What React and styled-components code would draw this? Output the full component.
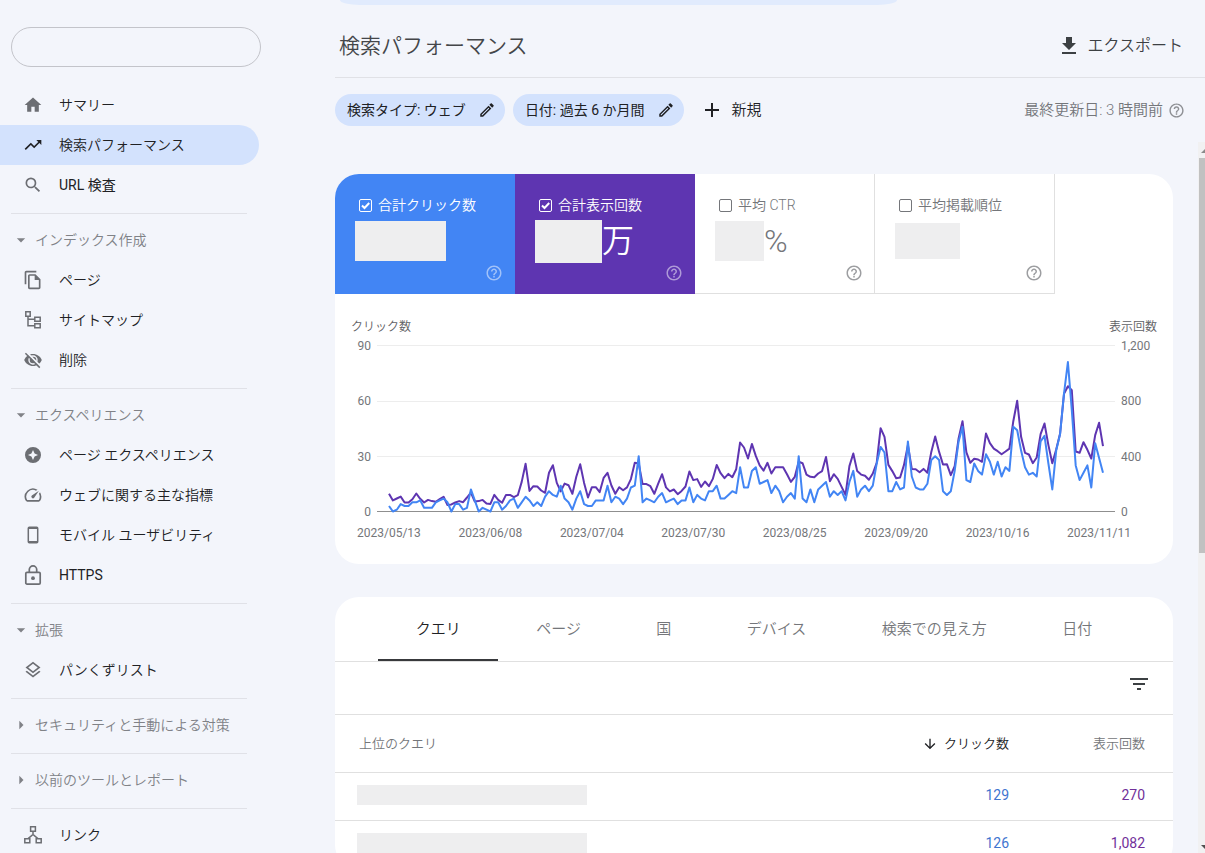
import React from 'react';
import styled, { createGlobalStyle, css } from 'styled-components';
import {
  MdAdd,
  MdArrowDownward,
  MdArrowDropDown,
  MdArrowRight,
  MdFileDownload,
  MdFilterList,
  MdHelpOutline,
  MdHome,
  MdOutlineEdit,
  MdOutlineFileCopy,
  MdOutlineLayers,
  MdOutlineSpeed,
  MdSearch,
  MdTrendingUp,
} from 'react-icons/md';

const GlobalStyle = createGlobalStyle`
  * {
    box-sizing: border-box;
  }
  body {
    margin: 0;
    background: #f3f5fb;
    color: #202124;
    font-family: Roboto, 'Noto Sans CJK JP', sans-serif;
    font-size: 14px;
    font-weight: 350;
    line-height: 20px;
  }
  button,
  input {
    font: inherit;
    color: inherit;
  }
  button {
    margin: 0;
    padding: 0;
    border: 0;
    background: none;
    cursor: pointer;
  }
  svg {
    display: block;
    flex: none;
  }
`;

const Page = styled.div`
  display: flex;
  height: 100vh;
  overflow: hidden;
`;

const Sidebar = styled.nav`
  flex: none;
  width: 335px;
  padding-top: 27px;
`;

const SiteInput = styled.input`
  display: block;
  width: 250px;
  height: 40px;
  margin: 0 0 18px 11px;
  padding: 0 16px;
  border: 1px solid #c3c4ca;
  border-radius: 20px;
  background: transparent;
`;

const NavItem = styled.a`
  display: flex;
  align-items: center;
  gap: 16px;
  width: 259px;
  height: 40px;
  padding-left: 23px;
  border-radius: 0 20px 20px 0;
  color: #202124;
  text-decoration: none;
  svg {
    color: #6c6e73;
  }
  ${({ $active }) =>
    $active &&
    css`
      background: #d3e2fd;
      svg {
        color: #202124;
      }
    `}
`;

const Latin = styled.span`
  font-weight: 400;
`;

const Divider = styled.hr`
  width: 236px;
  height: 1px;
  margin: 8px 0 6px 11px;
  border: 0;
  background: #e0e1e7;
`;

const SectionButton = styled.button`
  display: flex;
  align-items: center;
  gap: 4px;
  height: 40px;
  padding-left: 11px;
  color: #808287;
`;

const Main = styled.main`
  flex: 1;
  min-width: 0;
  display: flex;
  flex-direction: column;
`;

const Banner = styled.div`
  flex: none;
  width: 64%;
  height: 5px;
  margin-left: 5px;
  border-radius: 0 0 20px 20px / 0 0 5px 5px;
  background: #e1ebfd;
`;

const Header = styled.header`
  flex: none;
  display: flex;
  align-items: center;
  justify-content: space-between;
  height: 73px;
  padding: 10px 22px 0 4px;
  border-bottom: 1px solid #e0e1e6;
`;

const Title = styled.h1`
  margin: 0;
  color: #444649;
  font-size: 21px;
  font-weight: inherit;
  line-height: 28px;
`;

const ExportButton = styled.button`
  display: flex;
  align-items: center;
  gap: 6px;
  color: #3c4043;
  font-size: 16px;
`;

const FilterBar = styled.div`
  flex: none;
  display: flex;
  align-items: center;
  height: 64px;
  padding-right: 20px;
`;

const Chip = styled.button`
  display: flex;
  align-items: center;
  gap: 12px;
  height: 32px;
  margin-right: 8px;
  padding: 0 9px 0 12px;
  border-radius: 16px;
  background: #d3e2fd;
`;

const AddButton = styled.button`
  display: flex;
  align-items: center;
  gap: 8px;
  margin-left: 8px;
  font-size: 15px;
`;

const Updated = styled.div`
  display: flex;
  align-items: center;
  gap: 5px;
  margin-left: auto;
  color: #74767a;
  font-size: 15px;
`;

const Body = styled.div`
  flex: 1;
  min-height: 0;
  display: flex;
`;

const Content = styled.div`
  flex: 1;
  min-width: 0;
  display: flex;
  flex-direction: column;
  gap: 33px;
  margin-right: 25px;
  padding-top: 32px;
  overflow: hidden;
`;

const Card = styled.section`
  flex: none;
  border-radius: 24px;
  background: #fff;
  overflow: hidden;
`;

const Scrollbar = styled.div`
  flex: none;
  display: flex;
  flex-direction: column;
  width: 7px;
  padding: 1px 0 0 1px;
  background: #f1f1f2;
`;

const Thumb = styled.div`
  flex: 395;
  background: #c1c1c1;
`;

const Trough = styled.div`
  flex: 285;
`;

const Metrics = styled.div`
  display: flex;
`;

const Metric = styled.div`
  display: flex;
  flex-direction: column;
  width: 180px;
  height: 120px;
  padding: 21px 12px 12px 20px;
  background: ${({ $bg }) => $bg || '#fff'};
  box-shadow: ${({ $bg }) => ($bg ? 'none' : 'inset -1px -1px #e0e0e0')};
  color: ${({ $bg }) => ($bg ? '#fff' : '#74767a')};
  > svg {
    align-self: flex-end;
    margin-top: auto;
    opacity: ${({ $bg }) => ($bg ? 0.5 : 0.7)};
  }
`;

const MetricLabel = styled.label`
  display: flex;
  align-items: center;
  gap: 6px;
  padding-left: 4px;
`;

const CheckBox = styled.span`
  display: grid;
  width: 13px;
  height: 13px;
  > * {
    grid-area: 1 / 1;
  }
  svg {
    pointer-events: none;
  }
`;

const CheckInput = styled.input`
  appearance: none;
  width: 13px;
  height: 13px;
  margin: 0;
  border: 1px solid currentColor;
  border-radius: 2px;
`;

const MetricValue = styled.div`
  display: flex;
  align-items: center;
  height: 44px;
  margin-top: 4px;
  font-size: 32px;
  line-height: 44px;
`;

const Blank = styled.span`
  display: block;
  flex: none;
  width: ${({ $w }) => $w}px;
  height: ${({ $h }) => $h}px;
  background: #eeeeef;
`;

const Chart = styled.div`
  padding: 25px 0 23px;
  color: #74767a;
  font-size: 12px;
  font-weight: 400;
  line-height: 16px;
`;

const AxisTitles = styled.div`
  display: flex;
  justify-content: space-between;
  padding: 0 16px;
  color: #5f6165;
  font-weight: 350;
`;

const Plot = styled.div`
  display: grid;
  grid-template-columns: 42px minmax(0, 1fr) 58px;
  height: 167px;
  margin: 10px 0 13px;
`;

const AxisLabels = styled.div`
  display: flex;
  flex-direction: column;
  justify-content: space-between;
  margin: -7px 6px -8px;
  text-align: ${({ $align }) => $align};
`;

const Lines = styled.svg`
  width: 100%;
  height: 167px;
  overflow: visible;
  path {
    fill: none;
    stroke-width: 2;
    stroke-linejoin: round;
    vector-effect: non-scaling-stroke;
  }
`;

const Dates = styled.div`
  display: flex;
  justify-content: space-between;
  padding: 0 42px 0 22px;
`;

const Tabs = styled.div`
  display: flex;
  height: 65px;
  padding: 0 43px;
  border-bottom: 1px solid #e0e0e0;
`;

const Tab = styled.button`
  flex: 1 1 auto;
  border-top: 2px solid transparent;
  border-bottom: 2px solid ${({ $active }) => ($active ? '#38393c' : 'transparent')};
  color: ${({ $active }) => ($active ? '#202124' : '#74767a')};
  font-size: 15px;
`;

const TableTools = styled.div`
  display: flex;
  align-items: flex-start;
  justify-content: flex-end;
  height: 53px;
  padding: 10px 22px 0;
  border-bottom: 1px solid #e0e0e0;
  color: #3c4043;
`;

const Table = styled.table`
  width: 100%;
  border-collapse: separate;
  border-spacing: 0;
  table-layout: fixed;
`;

const HeadCell = styled.th`
  width: ${({ $width }) => $width || 'auto'};
  height: 58px;
  padding: 0 ${({ $right }) => $right || 0}px 0 24px;
  border-bottom: 1px solid #e0e0e0;
  color: ${({ $active }) => ($active ? '#202124' : '#74767a')};
  font-size: 13px;
  font-weight: inherit;
  text-align: ${({ $right }) => ($right ? 'right' : 'left')};
`;

const SortButton = styled.button`
  display: flex;
  align-items: center;
  gap: 6px;
  margin-left: auto;
`;

const Cell = styled.td`
  height: 48px;
  padding: 0 28px 3px 22px;
  border-bottom: 1px solid #e0e0e0;
  color: ${({ $color }) => $color};
  font-weight: 400;
  text-align: ${({ $color }) => ($color ? 'right' : 'left')};
`;

const Icon20 = ({ children }) => (
  <svg width="20" height="20" viewBox="0 0 20 20" fill="none" stroke="currentColor" strokeWidth="1.5">
    {children}
  </svg>
);

const SitemapIcon = () => (
  <Icon20>
    <path d="M2.8 1.8h4.4v4.4H2.8zM11.8 7.3h5.4v4h-5.4zM11.8 13.8h5.4v4h-5.4zM5 6.2v9.6h6.8M5 9.3h6.8" />
  </Icon20>
);

const HiddenIcon = () => (
  <Icon20>
    <path
      d="M10 4C6 4 2.7 6.4 1.2 10c1.5 3.600 4.800 6 8.800 6s7.300-2.400 8.800-6C17.300 6.400 14 4 10 4z"
      fill="currentColor"
      stroke="none"
    />
    <circle cx="10" cy="10" r="4" stroke="#f3f5fb" strokeWidth="1.400" />
    <path d="M3 1.800l14.500 14.500" stroke="#f3f5fb" strokeWidth="2" />
    <path d="M2.400 3.200l14.400 14.400" />
  </Icon20>
);

const ExperienceIcon = () => (
  <Icon20>
    <path
      fill="currentColor"
      stroke="none"
      fillRule="evenodd"
      d="M10 2a8 8 0 100 16 8 8 0 000-16zm0 3l1.600 3.400L15 10l-3.400 1.600L10 15l-1.600-3.400L5 10l3.400-1.600z"
    />
  </Icon20>
);

const PhoneIcon = () => (
  <Icon20>
    <rect x="5.300" y="2.300" width="9.400" height="15.400" rx="1" />
    <path d="M5.300 3.300h9.400M5.300 16.700h9.400" />
  </Icon20>
);

const LockIcon = () => (
  <Icon20>
    <rect x="2.800" y="7.300" width="14.400" height="11.800" rx="1.200" strokeWidth="1.700" />
    <path d="M6.300 7V4.600a3.700 3.700 0 017.400 0V7" strokeWidth="1.700" />
    <circle cx="10" cy="13.200" r="1.900" fill="currentColor" stroke="none" />
  </Icon20>
);

const LinksIcon = () => (
  <Icon20>
    <path d="M7.600 1.800h4.800v4.400H7.600zM1.800 13.800h5v4h-5zM13.200 13.800h5v4h-5zM10 6.200V10M4.800 13.800L10 9.500l5.200 4.300" />
  </Icon20>
);

const NAV = [
  {
    items: [
      { icon: MdHome, label: 'サマリー' },
      { icon: MdTrendingUp, label: '検索パフォーマンス', active: true },
      { icon: MdSearch, label: 'URL 検査', latin: true },
    ],
  },
  {
    title: 'インデックス作成',
    items: [
      { icon: MdOutlineFileCopy, label: 'ページ' },
      { icon: SitemapIcon, label: 'サイトマップ' },
      { icon: HiddenIcon, label: '削除' },
    ],
  },
  {
    title: 'エクスペリエンス',
    items: [
      { icon: ExperienceIcon, label: 'ページ エクスペリエンス' },
      { icon: MdOutlineSpeed, label: 'ウェブに関する主な指標' },
      { icon: PhoneIcon, label: 'モバイル ユーザビリティ' },
      { icon: LockIcon, label: 'HTTPS', latin: true },
    ],
  },
  { title: '拡張', items: [{ icon: MdOutlineLayers, label: 'パンくずリスト' }] },
  { title: 'セキュリティと手動による対策', items: [] },
  { title: '以前のツールとレポート', items: [] },
  { items: [{ icon: LinksIcon, label: 'リンク' }] },
];

const METRICS = [
  { label: '合計クリック数', bg: '#4285f4', w: 91, h: 40 },
  { label: '合計表示回数', bg: '#5e35b1', w: 67, h: 43, unit: '万' },
  { label: '平均 CTR', w: 49, h: 40, unit: '%' },
  { label: '平均掲載順位', w: 65, h: 36 },
];

const CLICKS = [
  3, 0, 1, 4, 3, 3, 5, 5, 6, 2, 2, 2, 5, 6, 7, 5, 0, 4, 4, 1, 2, 12, 6, 0, 2, 1,
  0, 5, 5, 1, 3, 6, 7, 2, 5, 8, 6, 3, 5, 3, 8, 11, 9, 8, 14, 7, 5, 1, 7, 11, 4, 3,
  3, 6, 6, 6, 14, 5, 8, 7, 4, 7, 13, 14, 30, 5, 7, 6, 5, 8, 10, 5, 6, 7, 4, 6, 6, 13,
  5, 9, 7, 6, 11, 11, 14, 7, 7, 9, 11, 10, 24, 13, 13, 22, 24, 15, 16, 17, 10, 14, 11, 5, 8, 10,
  7, 30, 7, 5, 12, 5, 12, 14, 16, 8, 11, 9, 11, 6, 16, 22, 8, 12, 14, 11, 14, 26, 35, 32, 11, 11,
  16, 12, 13, 38, 19, 13, 12, 12, 15, 28, 30, 28, 11, 9, 11, 22, 38, 46, 17, 16, 26, 22, 20, 31, 27, 20,
  27, 19, 24, 22, 46, 44, 33, 24, 20, 21, 19, 38, 41, 26, 12, 33, 42, 64, 81, 55, 25, 17, 21, 25, 13, 37,
  29, 21,
];

const IMPRESSIONS = [
  128, 80, 94, 108, 65, 65, 89, 130, 92, 65, 84, 75, 70, 89, 106, 46, 51, 65, 75, 67, 101, 137, 72, 75, 84, 58,
  55, 120, 84, 63, 120, 120, 104, 118, 214, 345, 149, 183, 181, 152, 135, 280, 335, 207, 145, 202, 190, 128, 251, 342, 207, 101,
  176, 176, 140, 243, 280, 188, 128, 176, 154, 174, 234, 352, 347, 198, 198, 183, 128, 202, 270, 174, 145, 159, 125, 149, 181, 289,
  227, 234, 178, 217, 183, 236, 337, 277, 241, 272, 248, 306, 499, 463, 383, 489, 402, 333, 296, 352, 275, 320, 320, 320, 270, 214,
  251, 359, 349, 267, 251, 248, 275, 292, 395, 219, 270, 236, 178, 120, 328, 419, 292, 267, 258, 229, 275, 352, 602, 540, 337, 292,
  241, 246, 337, 480, 308, 306, 284, 308, 280, 431, 542, 431, 340, 342, 263, 328, 528, 653, 427, 352, 381, 376, 359, 564, 494, 455,
  436, 414, 434, 455, 653, 800, 540, 424, 412, 349, 390, 559, 636, 480, 349, 448, 564, 851, 906, 877, 434, 424, 501, 446, 383, 552,
  641, 472,
];

const DATES = [
  '2023/05/13',
  '2023/06/08',
  '2023/07/04',
  '2023/07/30',
  '2023/08/25',
  '2023/09/20',
  '2023/10/16',
  '2023/11/11',
];

const TABS = ['クエリ', 'ページ', '国', 'デバイス', '検索での見え方', '日付'];

const ROWS = [
  ['129', '270'],
  ['126', '1,082'],
];

const linePath = (values, max) =>
  values
    .map((value, i) => {
      const x = 12 + (i * 714) / (values.length - 1);
      const y = 166.5 - (value / max) * 166;
      return `${i ? 'L' : 'M'}${x.toFixed(1)} ${y.toFixed(1)}`;
    })
    .join('');

const NavGroup = ({ title, items }) => (
  <>
    {title && (
      <SectionButton type="button" aria-expanded={items.length > 0}>
        {items.length ? <MdArrowDropDown size={20} /> : <MdArrowRight size={20} />}
        {title}
      </SectionButton>
    )}
    {items.map(({ icon: Icon, label, active, latin }) => (
      <NavItem key={label} href="#" $active={active}>
        <Icon size={20} />
        {latin ? <Latin>{label}</Latin> : label}
      </NavItem>
    ))}
  </>
);

const MetricTile = ({ label, bg, w, h, unit }) => (
  <Metric $bg={bg}>
    <MetricLabel>
      <CheckBox>
        <CheckInput type="checkbox" defaultChecked={Boolean(bg)} />
        {bg && (
          <svg width="13" height="13" viewBox="0 0 13 13" fill="none" stroke="currentColor" strokeWidth="2">
            <path d="M3 6.500l2.500 2.500L10.200 4" />
          </svg>
        )}
      </CheckBox>
      {label}
    </MetricLabel>
    <MetricValue>
      <Blank $w={w} $h={h} />
      {unit}
    </MetricValue>
    <MdHelpOutline size={18} />
  </Metric>
);

const PerformanceChart = () => (
  <Chart>
    <AxisTitles>
      <span>クリック数</span>
      <span>表示回数</span>
    </AxisTitles>
    <Plot>
      <AxisLabels $align="right">
        {['90', '60', '30', '0'].map((label) => (
          <span key={label}>{label}</span>
        ))}
      </AxisLabels>
      <Lines viewBox="0 0 738 167" preserveAspectRatio="none">
        {[0.5, 56.5, 111.5].map((y) => (
          <path key={y} d={`M0 ${y}H738`} stroke="#ededed" style={{ strokeWidth: 1 }} />
        ))}
        <path d="M0 166.500H738" stroke="#8f8f8f" style={{ strokeWidth: 1 }} />
        <path d={linePath(IMPRESSIONS, 1200)} stroke="#5e35b1" />
        <path d={linePath(CLICKS, 90)} stroke="#4285f4" />
      </Lines>
      <AxisLabels $align="left">
        {['1,200', '800', '400', '0'].map((label) => (
          <span key={label}>{label}</span>
        ))}
      </AxisLabels>
    </Plot>
    <Dates>
      {DATES.map((date) => (
        <span key={date}>{date}</span>
      ))}
    </Dates>
  </Chart>
);

const QueryTable = () => (
  <Table>
    <thead>
      <tr>
        <HeadCell>上位のクエリ</HeadCell>
        <HeadCell $width="160px" $right={28} $active>
          <SortButton type="button">
            <MdArrowDownward size={16} />
            クリック数
          </SortButton>
        </HeadCell>
        <HeadCell $width="136px" $right={28}>
          表示回数
        </HeadCell>
      </tr>
    </thead>
    <tbody>
      {ROWS.map(([clicks, impressions]) => (
        <tr key={clicks}>
          <Cell>
            <Blank $w={230} $h={20} />
          </Cell>
          <Cell $color="#3f75cf">{clicks}</Cell>
          <Cell $color="#71309a">{impressions}</Cell>
        </tr>
      ))}
    </tbody>
  </Table>
);

const App = () => {
  return (
    <>
      <GlobalStyle />
      <Page>
        <Sidebar>
          <SiteInput type="text" aria-label="プロパティ" />
          {NAV.map((group, i) => (
            <React.Fragment key={i}>
              {i > 0 && <Divider />}
              <NavGroup {...group} />
            </React.Fragment>
          ))}
        </Sidebar>
        <Main>
          <Banner />
          <Header>
            <Title>検索パフォーマンス</Title>
            <ExportButton type="button">
              <MdFileDownload size={24} />
              エクスポート
            </ExportButton>
          </Header>
          <FilterBar>
            <Chip type="button">
              <Latin>検索タイプ: ウェブ</Latin>
              <MdOutlineEdit size={18} />
            </Chip>
            <Chip type="button">
              <Latin>日付: 過去 6 か月間</Latin>
              <MdOutlineEdit size={18} />
            </Chip>
            <AddButton type="button">
              <MdAdd size={24} />
              新規
            </AddButton>
            <Updated>
              最終更新日: 3 時間前
              <MdHelpOutline size={17} opacity={0.8} />
            </Updated>
          </FilterBar>
          <Body>
            <Content>
              <Card>
                <Metrics>
                  {METRICS.map((metric) => (
                    <MetricTile key={metric.label} {...metric} />
                  ))}
                </Metrics>
                <PerformanceChart />
              </Card>
              <Card>
                <Tabs role="tablist">
                  {TABS.map((tab, i) => (
                    <Tab key={tab} type="button" role="tab" aria-selected={i === 0} $active={i === 0}>
                      {tab}
                    </Tab>
                  ))}
                </Tabs>
                <TableTools>
                  <button type="button" aria-label="フィルタ">
                    <MdFilterList size={24} />
                  </button>
                </TableTools>
                <QueryTable />
              </Card>
            </Content>
            <Scrollbar>
              <svg width="6" height="15" viewBox="0 0 6 15">
                <path d="M2 10l4-4v4z" fill="#8a8a8a" />
              </svg>
              <Thumb />
              <Trough />
              <svg width="6" height="15" viewBox="0 0 6 15">
                <path d="M2 7h4v4z" fill="#505050" />
              </svg>
            </Scrollbar>
          </Body>
        </Main>
      </Page>
    </>
  );
};

export default App;
